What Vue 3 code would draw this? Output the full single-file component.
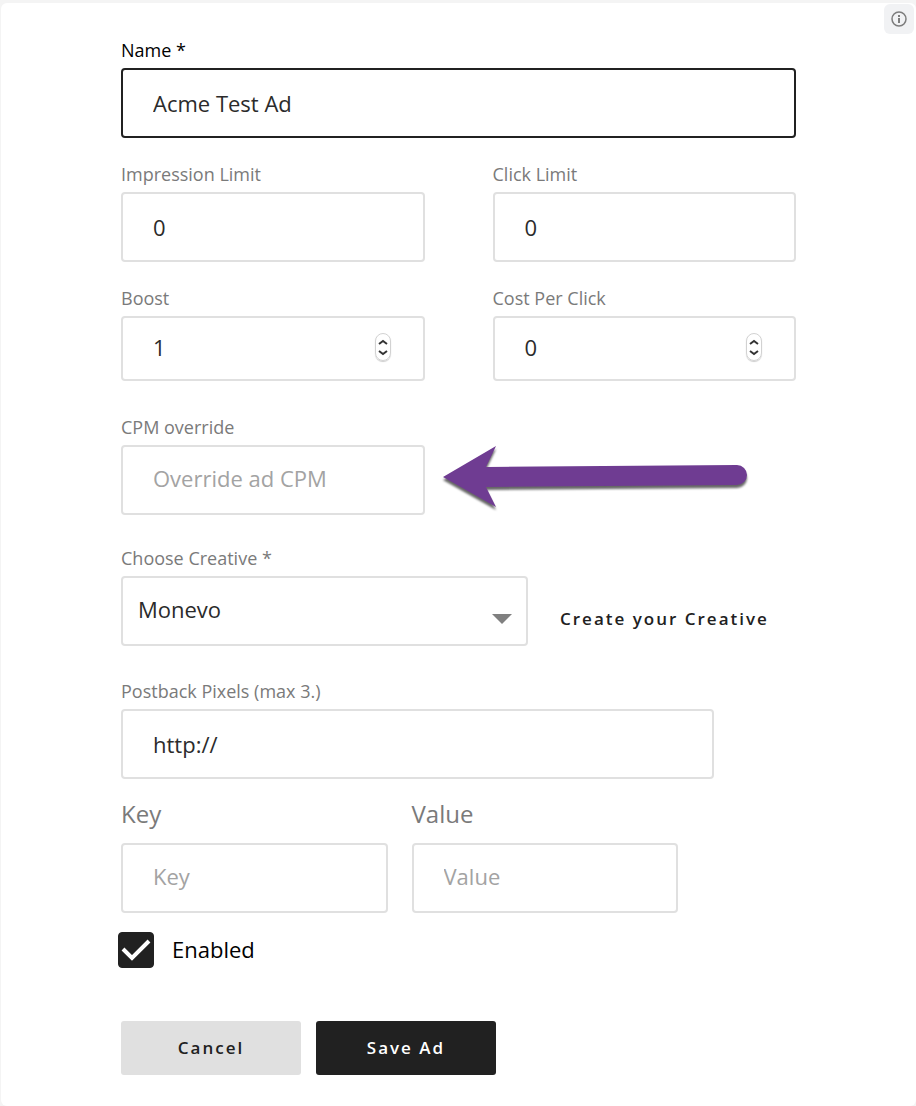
<template>
    <div class="page">
        <form class="card" @submit.prevent>
            <button type="button" class="info" aria-label="Info">
                <svg width="16" height="16" viewBox="0 0 16 16" aria-hidden="true">
                    <circle cx="8" cy="8" r="7" fill="none" stroke="#7d7d7d" stroke-width="1.5" />
                    <path d="M7 4h2v2H7zM7 7h2v5H7z" fill="#7d7d7d" />
                </svg>
            </button>

            <div class="field active">
                <label for="name">Name *</label>
                <input id="name" v-model="ad.name" type="text" />
            </div>

            <div class="columns">
                <div class="field">
                    <label for="impressions">Impression Limit</label>
                    <input id="impressions" v-model="ad.impressionLimit" type="text" />
                </div>
                <div class="field">
                    <label for="clicks">Click Limit</label>
                    <input id="clicks" v-model="ad.clickLimit" type="text" />
                </div>
                <div v-for="item in steppers" :key="item.id" class="field">
                    <label :for="item.id">{{ item.label }}</label>
                    <div class="number">
                        <input :id="item.id" v-model.number="ad[item.id]" type="number" />
                        <div class="spinner">
                            <button type="button" :aria-label="'Increase ' + item.label" @click="ad[item.id]++">
                                <svg width="10" height="6" viewBox="0 0 10 6"><path d="M1 5l4-3 4 3" /></svg>
                            </button>
                            <button type="button" :aria-label="'Decrease ' + item.label" @click="ad[item.id]--">
                                <svg width="10" height="6" viewBox="0 0 10 6"><path d="M1 1l4 3 4-3" /></svg>
                            </button>
                        </div>
                    </div>
                </div>
            </div>

            <div class="columns override">
                <div class="field">
                    <label for="cpm">CPM override</label>
                    <input id="cpm" v-model="ad.cpm" type="text" placeholder="Override ad CPM" />
                    <!-- callout arrow -->
                    <svg class="arrow" width="312" height="70" viewBox="0 0 312 70" aria-hidden="true">
                        <path d="M3 32L56 1L46 22L297 20A10 10 0 0 1 297 40L46 42L56 62Z" />
                    </svg>
                </div>
            </div>

            <div class="creative">
                <div class="field">
                    <label for="creative">Choose Creative *</label>
                    <div class="select">
                        <select id="creative" v-model="ad.creative">
                            <option>Monevo</option>
                        </select>
                        <svg width="20" height="10" viewBox="0 0 20 10" aria-hidden="true">
                            <path d="M0 0h20L10 10z" fill="#808080" />
                        </svg>
                    </div>
                </div>
                <a href="#">Create your Creative</a>
            </div>

            <div class="field postback">
                <label for="postback">Postback Pixels (max 3.)</label>
                <input id="postback" v-model="ad.postback" type="text" />
            </div>

            <div class="pair">
                <div class="field">
                    <label for="key">Key</label>
                    <input id="key" v-model="ad.key" type="text" placeholder="Key" />
                </div>
                <div class="field">
                    <label for="value">Value</label>
                    <input id="value" v-model="ad.value" type="text" placeholder="Value" />
                </div>
            </div>

            <label class="enabled">
                <input v-model="ad.enabled" type="checkbox" />
                <span>Enabled</span>
            </label>

            <div class="actions">
                <button type="button" class="btn">Cancel</button>
                <button type="submit" class="btn primary">Save Ad</button>
            </div>
        </form>
    </div>
</template>

<script setup>
import { reactive } from 'vue';

const ad = reactive({
    name: 'Acme Test Ad',
    impressionLimit: '0',
    clickLimit: '0',
    boost: 1,
    cpc: 0,
    cpm: '',
    creative: 'Monevo',
    postback: 'http://',
    key: '',
    value: '',
    enabled: true
});

const steppers = [
    { id: 'boost', label: 'Boost' },
    { id: 'cpc', label: 'Cost Per Click' }
];
</script>

<style>
body {
    background: #f4f4f4;
}
</style>

<style scoped>
.page {
    padding: 3px 0 0 1px;
    font-family: "Open Sans", "Noto Sans", sans-serif;
    color: #212121;
}

.page * {
    box-sizing: border-box;
}

.card {
    position: relative;
    min-height: calc(100vh - 3px);
    padding: 35px 120px 31px;
    border-radius: 6px;
    background: #fff;
}

.info {
    position: absolute;
    top: 1px;
    right: 2px;
    display: flex;
    align-items: center;
    justify-content: center;
    width: 30px;
    height: 30px;
    padding: 0;
    border: 0;
    border-radius: 6px;
    background: #f1f2f4;
}

.field {
    display: flex;
    flex-direction: column;
    gap: 6px;
    min-width: 0;
}

.field label {
    font-size: 18px;
    line-height: 24px;
    color: #7a7a7a;
}

.field.active label {
    color: #000;
}

input,
select {
    width: 100%;
    min-width: 0;
    margin: 0;
    font-family: inherit;
    font-size: 22px;
    color: #2b2b2b;
    background: #fff;
    appearance: none;
    outline: none;
}

.field > input,
.number,
select {
    height: 70px;
    border: 2px solid #e0e0e0;
    border-radius: 4px;
}

.field > input {
    padding: 0 30px;
}

.field > input:placeholder-shown {
    padding-bottom: 4px;
}

.field.active > input {
    border-color: #212121;
}

input::placeholder {
    color: #a3a3a3;
    opacity: 1;
}

.columns {
    display: grid;
    grid-template-columns: 1fr 1fr;
    gap: 24px 68px;
    margin-top: 24px;
}

/* number boxes with their own stepper */
.number {
    display: flex;
    align-items: center;
    height: 65px;
    padding: 0 32px 3px 30px;
}

.number input {
    flex: 1;
    padding: 0;
    border: 0;
    appearance: textfield;
}

.number input::-webkit-inner-spin-button {
    display: none;
}

.spinner {
    display: flex;
    flex-direction: column;
    width: 16px;
    height: 28px;
    padding: 2px 0;
    border: 1px solid #d2d2d2;
    border-radius: 8px;
    box-shadow: 0 1px 1px rgba(0, 0, 0, 0.2);
}

.spinner button {
    display: flex;
    flex: 1;
    align-items: center;
    justify-content: center;
    padding: 0;
    border: 0;
    background: none;
}

.spinner path {
    fill: none;
    stroke: #333;
    stroke-width: 2;
}

.override {
    margin-top: 34px;
}

.override .field {
    position: relative;
}

.arrow {
    position: absolute;
    top: 30px;
    left: calc(100% + 15px);
    filter: drop-shadow(0 3px 1px rgba(0, 0, 0, 0.6));
}

.arrow path {
    fill: #6f3c92;
}

.creative {
    display: flex;
    align-items: flex-end;
    gap: 32px;
    margin-top: 31px;
}

.creative .field {
    flex: 0 1 407px;
}

.creative a {
    padding-bottom: 15px;
    font-size: 17px;
    font-weight: 600;
    line-height: 24px;
    letter-spacing: 2px;
    color: #212121;
    text-decoration: none;
}

.select {
    display: grid;
    align-items: center;
}

.select > * {
    grid-area: 1 / 1;
}

.select svg {
    justify-self: end;
    margin: 16px 16px 0 0;
    pointer-events: none;
}

select {
    padding: 0 48px 4px 15px;
}

.postback {
    max-width: 593px;
    margin-top: 33px;
}

.pair {
    display: grid;
    grid-template-columns: 1fr 1fr;
    gap: 24px;
    max-width: 557px;
    margin-top: 19px;
}

.pair .field {
    gap: 13px;
}

.pair label {
    font-size: 24px;
    line-height: 32px;
}

.enabled {
    display: flex;
    align-items: center;
    gap: 18px;
    width: fit-content;
    margin: 19px 0 0 -3px;
    font-size: 22px;
    color: #000;
}

.enabled input {
    flex: none;
    width: 36px;
    height: 36px;
    border: 1px solid #212121;
    border-radius: 4px;
}

.enabled input:checked {
    background: #212121 url("data:image/svg+xml,%3Csvg xmlns='http://www.w3.org/2000/svg' viewBox='0 0 34 34'%3E%3Cpath d='M4 16l9 9L30 8' fill='none' stroke='%23fff' stroke-width='4'/%3E%3C/svg%3E") center / 34px no-repeat;
}

.enabled span {
    padding-bottom: 2px;
    line-height: 34px;
}

.actions {
    display: flex;
    gap: 15px;
    margin-top: 53px;
}

.btn {
    width: 180px;
    height: 54px;
    padding: 0 0 2px;
    border: 0;
    border-radius: 3px;
    font-family: inherit;
    font-size: 17px;
    font-weight: 600;
    letter-spacing: 2px;
    color: #212121;
    background: #e0e0e0;
}

.btn.primary {
    color: #fff;
    background: #212121;
}
</style>
